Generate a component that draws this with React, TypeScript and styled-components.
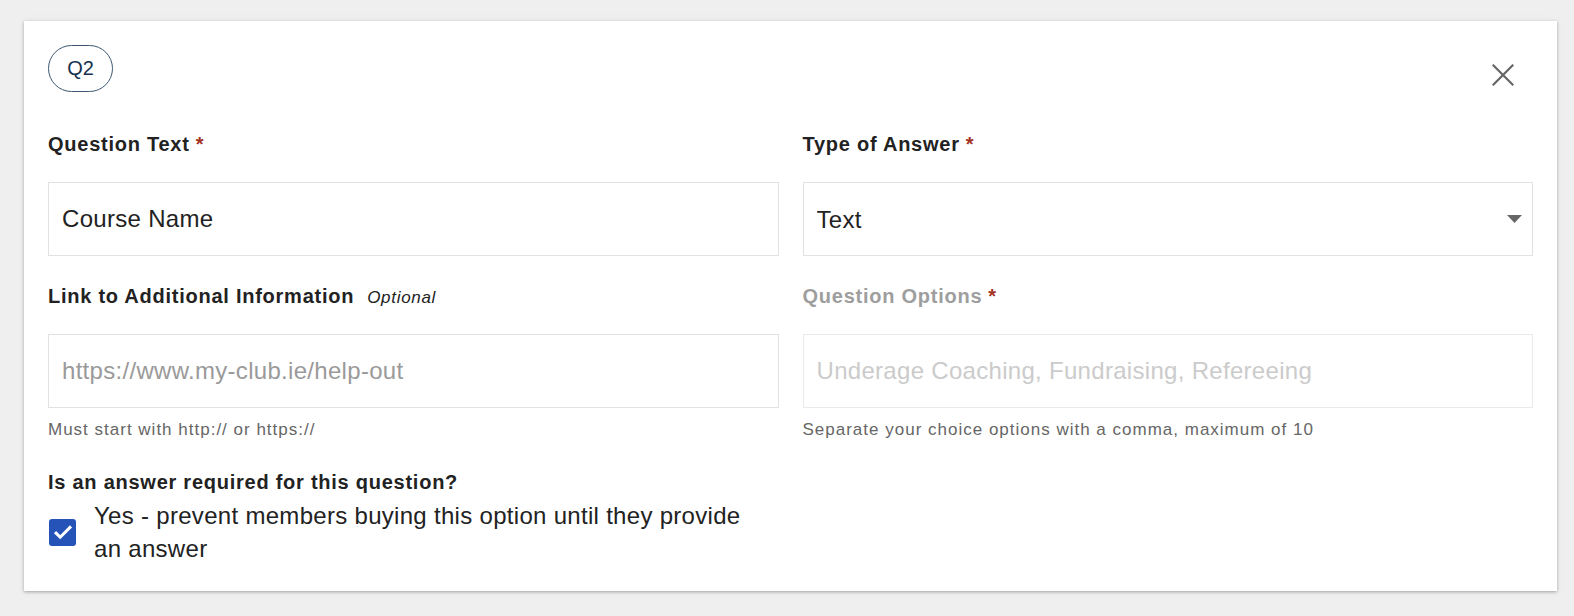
import React from "react";
import styled, { createGlobalStyle } from "styled-components";

const GlobalStyle = createGlobalStyle`
  html, body { margin: 0; padding: 0; background: #efefef; }
  body { font-family: "Liberation Sans", Arial, Helvetica, sans-serif; color: #222; }
  * { box-sizing: border-box; }
`;

const Page = styled.div`
  padding: 21px 17px 26px 24px;
`;

const Card = styled.section`
  background: #fff;
  box-shadow: 0 1px 3px rgba(0, 0, 0, 0.3), 0 0 10px rgba(0, 0, 0, 0.04);
  padding: 24px 24px 26px 24px;
`;

const Header = styled.div`
  display: flex;
  justify-content: space-between;
  align-items: flex-start;
  height: 47px;
  margin-bottom: 38px;
`;

const Chip = styled.div`
  width: 65px;
  height: 47px;
  border: 1px solid #3e5873;
  border-radius: 24px;
  display: flex;
  align-items: center;
  justify-content: center;
  font-size: 20px;
  color: #17314d;
`;

const CloseButton = styled.button`
  width: 40px;
  height: 40px;
  margin: 10px 10px 0 0;
  padding: 0;
  border: none;
  background: transparent;
  display: flex;
  align-items: center;
  justify-content: center;
  cursor: pointer;
`;

const Grid = styled.div`
  display: grid;
  grid-template-columns: 1fr 1fr;
  column-gap: 24px;
  row-gap: 26px;
`;

const Field = styled.div`
  display: flex;
  flex-direction: column;
  min-width: 0;
`;

const LabelRow = styled.div`
  display: flex;
  align-items: baseline;
  gap: 13px;
  height: 26px;
  padding-top: 2px;
  margin-bottom: 26px;
`;

const Label = styled.label<{ $disabled?: boolean }>`
  font-size: 20px;
  line-height: 24px;
  font-weight: 700;
  letter-spacing: 0.75px;
  color: ${(p) => (p.$disabled ? "#9e9e9e" : "#222")};
  white-space: nowrap;
`;

const Req = styled.span`
  color: #a3321f;
  margin-left: 6px;
`;

const Optional = styled.span`
  font-size: 17px;
  font-style: italic;
  letter-spacing: 0.7px;
  color: #222;
`;

const TextInput = styled.input`
  width: 100%;
  height: 74px;
  border: 1px solid ${(p) => (p.disabled ? "#ebebeb" : "#e2e2e2")};
  border-radius: 0;
  background: #fff;
  padding: 0 13px;
  font-family: "Liberation Sans", Arial, sans-serif;
  font-size: 24px;
  letter-spacing: 0.3px;
  color: #222;
  outline: none;
  &::placeholder {
    color: ${(p) => (p.disabled ? "#cbcbcb" : "#9a9a9a")};
  }
`;

const SelectWrap = styled.div`
  position: relative;
  width: 100%;
`;

const Select = styled.select`
  width: 100%;
  height: 74px;
  border: 1px solid #e2e2e2;
  border-radius: 0;
  background: #fff;
  padding: 0 40px 0 13px;
  font-family: "Liberation Sans", Arial, sans-serif;
  font-size: 24px;
  letter-spacing: 0.3px;
  color: #222;
  appearance: none;
  -webkit-appearance: none;
  outline: none;
`;

const Arrow = styled.svg`
  position: absolute;
  right: 11px;
  top: 50%;
  transform: translateY(-50%);
  pointer-events: none;
`;

const Helper = styled.div`
  margin-top: 12px;
  font-size: 17px;
  line-height: 20px;
  letter-spacing: 1px;
  color: #666;
`;

const Required = styled.div`
  margin-top: 4px;
  display: flex;
  flex-direction: column;
  gap: 5px;
`;

const CheckRow = styled.label`
  display: flex;
  align-items: center;
  gap: 18px;
  padding-left: 1px;
`;

const Box = styled.span`
  flex: none;
  width: 27px;
  height: 27px;
  border-radius: 3px;
  background: #2553b8;
  display: flex;
  align-items: center;
  justify-content: center;
`;

const CheckText = styled.span`
  font-size: 24px;
  line-height: 33px;
  letter-spacing: 0.3px;
  color: #222;
  max-width: 660px;
`;

export default function App() {
  return (
    <>
      <GlobalStyle />
      <Page>
        <Card>
          <Header>
            <Chip>Q2</Chip>
            <CloseButton aria-label="Close">
              <svg width="22" height="22" viewBox="0 0 22 22">
                <path d="M1.5 1.5 L20.5 20.5 M20.5 1.5 L1.5 20.5" stroke="#666" strokeWidth="2.2" strokeLinecap="square" />
              </svg>
            </CloseButton>
          </Header>
          <Grid>
            <Field>
              <LabelRow>
                <Label>
                  Question Text<Req>*</Req>
                </Label>
              </LabelRow>
              <TextInput defaultValue="Course Name" />
            </Field>
            <Field>
              <LabelRow>
                <Label>
                  Type of Answer<Req>*</Req>
                </Label>
              </LabelRow>
              <SelectWrap>
                <Select defaultValue="Text">
                  <option>Text</option>
                  <option>Choice</option>
                </Select>
                <Arrow width="15" height="8" viewBox="0 0 15 8">
                  <path d="M0 0 H15 L7.5 8 Z" fill="#666" />
                </Arrow>
              </SelectWrap>
            </Field>
            <Field>
              <LabelRow>
                <Label>Link to Additional Information</Label>
                <Optional>Optional</Optional>
              </LabelRow>
              <TextInput placeholder="https://www.my-club.ie/help-out" />
              <Helper>Must start with http:// or https://</Helper>
            </Field>
            <Field>
              <LabelRow>
                <Label $disabled>
                  Question Options<Req>*</Req>
                </Label>
              </LabelRow>
              <TextInput disabled placeholder="Underage Coaching, Fundraising, Refereeing" />
              <Helper>Separate your choice options with a comma, maximum of 10</Helper>
            </Field>
            <Required>
              <Label>Is an answer required for this question?</Label>
              <CheckRow>
                <Box>
                  <svg width="22" height="18" viewBox="0 0 22 18">
                    <path d="M3 9.2 L8.2 14.2 L19 3.4" stroke="#fff" strokeWidth="3" fill="none" />
                  </svg>
                </Box>
                <CheckText>Yes - prevent members buying this option until they provide an answer</CheckText>
              </CheckRow>
            </Required>
          </Grid>
        </Card>
      </Page>
    </>
  );
}
